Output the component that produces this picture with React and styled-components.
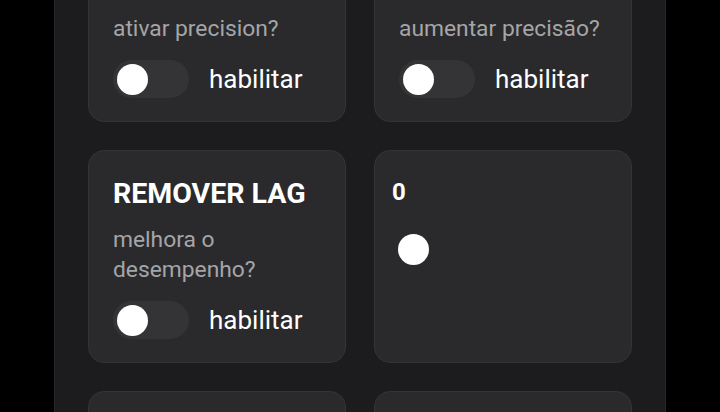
import styled, { createGlobalStyle } from "styled-components";

const GlobalStyle = createGlobalStyle`
  html, body {
    margin: 0;
    padding: 0;
    background: #000;
    font-family: Roboto, "Noto Sans", sans-serif;
    overflow: hidden;
  }
`;

const Screen = styled.main`
  height: 100vh;
  overflow: hidden;
`;

const Panel = styled.section`
  width: 612px;
  margin: -61px auto 0;
  min-height: 600px;
  background: #1c1c1e;
  border-left: 1px solid #262628;
  border-right: 1px solid #262628;
  padding: 0 33px;
  box-sizing: border-box;
`;

const Grid = styled.div`
  display: grid;
  grid-template-columns: 1fr 1fr;
  gap: 28px;
`;

const Card = styled.div`
  background: #2a2a2c;
  border: 1px solid #343436;
  border-radius: 16px;
  padding: ${(p) => (p.$compact ? "26px 17px" : "24px 24px 23px")};
  box-sizing: border-box;
  color: #fff;
`;

const Title = styled.h2`
  margin: 0 0 12px;
  font-size: 28.5px;
  line-height: 38px;
  font-weight: 700;
  color: #fff;
`;

const Desc = styled.p`
  margin: 0 0 16px;
  font-size: 22.8px;
  line-height: 30px;
  color: #a5a5a8;
`;

const ToggleRow = styled.label`
  display: flex;
  align-items: center;
  gap: 20px;
  font-size: 26px;
  color: #fff;
`;

const Track = styled.span`
  width: 76px;
  height: 38px;
  border-radius: 19px;
  background: #343436;
  display: flex;
  align-items: center;
  padding: 0 4px;
  box-sizing: border-box;
  justify-content: ${(p) => (p.$on ? "flex-end" : "flex-start")};
`;

const Knob = styled.span`
  width: 31px;
  height: 31px;
  border-radius: 50%;
  background: #fff;
`;

const Value = styled.div`
  font-size: 24px;
  line-height: 30px;
  font-weight: 700;
  margin: 0 0 27px;
`;

const SliderTrack = styled.div`
  padding: 0 6px;
  height: 31px;
  display: flex;
  align-items: center;
`;

const Thumb = styled.span`
  width: 31px;
  height: 31px;
  border-radius: 50%;
  background: #fff;
`;

function Toggle({ on }) {
  return (
    <ToggleRow>
      <Track $on={on}>
        <Knob />
      </Track>
      habilitar
    </ToggleRow>
  );
}

function OptionCard({ title, desc }) {
  return (
    <Card>
      <Title>{title}</Title>
      <Desc>{desc}</Desc>
      <Toggle />
    </Card>
  );
}

export default function App() {
  return (
    <>
      <GlobalStyle />
      <Screen>
        <Panel>
          <Grid>
            <OptionCard title="PRECISION" desc="ativar precision?" />
            <OptionCard title="AIMBOT" desc="aumentar precisão?" />
            <OptionCard title="REMOVER LAG" desc="melhora o desempenho?" />
            <Card $compact>
              <Value>0</Value>
              <SliderTrack>
                <Thumb />
              </SliderTrack>
            </Card>
            <OptionCard title="FPS" desc="aumentar fps?" />
            <OptionCard title="SENSI" desc="ajustar sensibilidade?" />
          </Grid>
        </Panel>
      </Screen>
    </>
  );
}
